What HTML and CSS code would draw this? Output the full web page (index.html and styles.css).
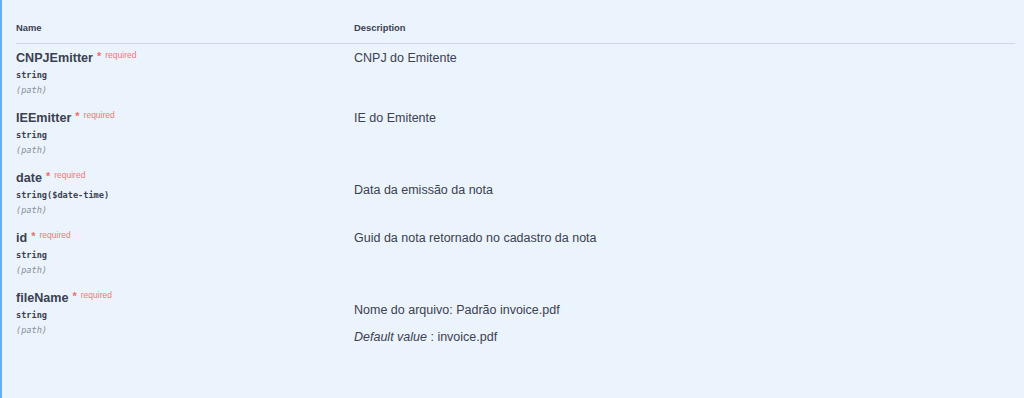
FILE: index.html
```html
<!DOCTYPE html>
<html lang="pt">
<head>
<meta charset="utf-8">
<title>Parameters</title>
<link rel="stylesheet" href="styles.css">
</head>
<body>
<div class="opblock-body">
  <div class="params">
    <div class="params-head">
      <div class="head-cell">Name</div>
      <div class="head-cell">Description</div>
    </div>

    <div class="param-row">
      <div class="col-name">
        <div class="param-name">CNPJEmitter<span class="star">*</span><span class="req">required</span></div>
        <div class="param-type">string</div>
        <div class="param-in">(path)</div>
      </div>
      <div class="col-desc">
        <div class="desc-line">CNPJ do Emitente</div>
      </div>
    </div>

    <div class="param-row">
      <div class="col-name">
        <div class="param-name">IEEmitter<span class="star">*</span><span class="req">required</span></div>
        <div class="param-type">string</div>
        <div class="param-in">(path)</div>
      </div>
      <div class="col-desc">
        <div class="desc-line">IE do Emitente</div>
      </div>
    </div>

    <div class="param-row">
      <div class="col-name">
        <div class="param-name">date<span class="star">*</span><span class="req">required</span></div>
        <div class="param-type">string($date-time)</div>
        <div class="param-in">(path)</div>
      </div>
      <div class="col-desc">
        <p class="desc-md">Data da emissão da nota</p>
      </div>
    </div>

    <div class="param-row">
      <div class="col-name">
        <div class="param-name">id<span class="star">*</span><span class="req">required</span></div>
        <div class="param-type">string</div>
        <div class="param-in">(path)</div>
      </div>
      <div class="col-desc">
        <div class="desc-line">Guid da nota retornado no cadastro da nota</div>
      </div>
    </div>

    <div class="param-row">
      <div class="col-name">
        <div class="param-name">fileName<span class="star">*</span><span class="req">required</span></div>
        <div class="param-type">string</div>
        <div class="param-in">(path)</div>
      </div>
      <div class="col-desc">
        <p class="desc-md">Nome do arquivo: Padrão invoice.pdf</p>
        <p class="desc-default"><i>Default value</i> : invoice.pdf</p>
      </div>
    </div>
  </div>
</div>
</body>
</html>
```

FILE: styles.css
```css
html, body {
  margin: 0;
  padding: 0;
  height: 100%;
}

body {
  background: #ebf3fc;
  font-family: "Liberation Sans", Arial, sans-serif;
  color: #3b4151;
}

.opblock-body {
  min-height: 100%;
  box-sizing: border-box;
  border-left: 2px solid #61affe;
  padding: 0 9px 0 14px;
}

.params-head,
.param-row {
  display: grid;
  grid-template-columns: 338px 1fr;
}

.params-head {
  padding: 22px 0 9px;
  border-bottom: 1px solid #cfd9e5;
}

.head-cell {
  font-size: 9.4px;
  line-height: 12px;
  font-weight: 700;
  color: #3b4151;
}

.param-row {
  height: 60px;
  box-sizing: border-box;
  padding-top: 6px;
}

.param-name {
  font-size: 12.6px;
  line-height: 16px;
  font-weight: 700;
  color: #3b4151;
  white-space: nowrap;
}

.star {
  color: #f26b6f;
  font-size: 11px;
  font-weight: 700;
  margin-left: 4px;
  vertical-align: top;
  position: relative;
  top: -2px;
}

.req {
  color: #f5767a;
  font-size: 8.5px;
  font-weight: 400;
  margin-left: 4px;
  vertical-align: top;
  position: relative;
  top: -3px;
}

.param-type {
  margin-top: 3px;
  font-family: "DejaVu Sans Mono", "Liberation Mono", monospace;
  font-size: 8.6px;
  line-height: 12px;
  font-weight: 700;
  color: #3b4151;
}

.param-in {
  margin-top: 3px;
  font-family: "DejaVu Sans Mono", "Liberation Mono", monospace;
  font-size: 8.6px;
  line-height: 12px;
  font-style: italic;
  color: #8a8f99;
}

.col-desc {
  font-size: 12.5px;
  line-height: 16px;
  color: #3b4151;
}

.desc-line,
.desc-md,
.desc-default {
  margin: 0;
  white-space: nowrap;
}

.desc-md {
  margin-top: 12px;
}

.desc-default {
  margin-top: 11px;
}
```
